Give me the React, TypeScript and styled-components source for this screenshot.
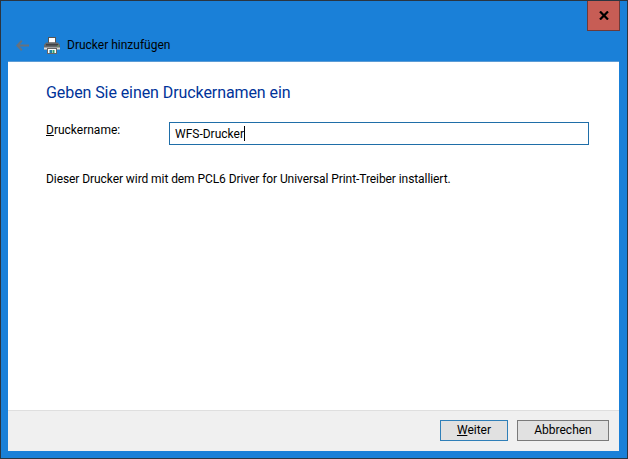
import styled, { createGlobalStyle } from 'styled-components';

const GlobalStyle = createGlobalStyle`
  html, body {
    margin: 0;
    padding: 0;
    background: #1a80d8;
  }
  * {
    box-sizing: border-box;
  }
`;

function BackArrow() {
  return (
    <svg width='13' height='11' viewBox='0 0 13 11'>
      <path d='M5.8 0.7 L1.3 5.5 L5.8 10.3 M1.3 5.5 H13' fill='none' stroke='#66727e' strokeWidth='2' />
    </svg>
  );
}

function PrinterIcon() {
  return (
    <svg width='16' height='17' viewBox='0 0 16 17'>
      <rect x='4.5' y='0.5' width='7' height='5.5' fill='#fff' stroke='#555' />
      <path d='M2 5.5 H14 L16 8 V12.5 H0 V8 Z' fill='#65696d' />
      <rect x='0' y='10.5' width='16' height='2' fill='#dcdcdc' />
      <rect x='2' y='7' width='12' height='1.5' fill='#3f4246' />
      <rect x='3.5' y='11.5' width='9' height='5' fill='#fff' stroke='#666' />
      <rect x='5.5' y='13' width='2.5' height='3' fill='#1c7fa8' />
      <rect x='8.5' y='13' width='2' height='3' fill='#2f9e6e' />
      <rect x='13.5' y='8.5' width='1' height='1' fill='#5fe06a' />
    </svg>
  );
}

export default function App() {
  return (
    <>
      <GlobalStyle />
      <StyledWindow>
        <StyledCaption>
          <StyledCloseButton>
            <svg width='10' height='9' viewBox='0 0 10 9'>
              <path d='M1 0.5 L9 8.5 M9 0.5 L1 8.5' stroke='#000' strokeWidth='2.2' />
            </svg>
          </StyledCloseButton>
        </StyledCaption>
        <StyledNavRow>
          <StyledBackSlot>
            <BackArrow />
          </StyledBackSlot>
          <PrinterIcon />
          <StyledWindowTitle>Drucker hinzufügen</StyledWindowTitle>
        </StyledNavRow>
        <StyledPanel>
          <StyledContent>
            <StyledHeading>Geben Sie einen Druckernamen ein</StyledHeading>
            <StyledFieldRow>
              <StyledLabel htmlFor='printerName'>
                <u>D</u>ruckername:
              </StyledLabel>
              <StyledField>
                <StyledValue id='printerName'>WFS-Drucker</StyledValue>
                <StyledCaret />
              </StyledField>
            </StyledFieldRow>
            <StyledInfo>Dieser Drucker wird mit dem PCL6 Driver for Universal Print-Treiber installiert.</StyledInfo>
          </StyledContent>
          <StyledFooter>
            <StyledButton $isDefault>
              <u>W</u>eiter
            </StyledButton>
            <StyledButton>Abbrechen</StyledButton>
          </StyledFooter>
        </StyledPanel>
      </StyledWindow>
    </>
  );
}

const StyledWindow = styled.div`
  display: flex;
  flex-direction: column;
  width: 628px;
  height: 459px;
  background: #1a80d8;
  border: 1px solid #2b3540;
  font-family: 'Roboto', 'Noto Sans', sans-serif;
  font-size: 12px;
  overflow: hidden;
`;

const StyledCaption = styled.div`
  display: flex;
  justify-content: flex-end;
  height: 30px;
  padding-right: 7px;
`;

const StyledCloseButton = styled.div`
  display: flex;
  align-items: center;
  justify-content: center;
  width: 33px;
  height: 30px;
  background: #c75d55;
  border: 1px solid #6b3a3a;
  border-top: none;
`;

const StyledNavRow = styled.div`
  display: flex;
  align-items: center;
  height: 31px;
  padding: 0 0 3px 15px;
`;

const StyledBackSlot = styled.div`
  display: flex;
  width: 28px;
`;

const StyledWindowTitle = styled.span`
  margin-left: 7px;
  color: #000;
`;

const StyledPanel = styled.div`
  display: flex;
  flex: 1;
  flex-direction: column;
  margin: 0 8px 7px 7px;
  background: #fff;
  box-shadow: 0 -1px 0 #5b9bd5;
`;

const StyledContent = styled.div`
  flex: 1;
  padding: 20px 30px 0 38px;
`;

const StyledHeading = styled.h1`
  margin: 0;
  color: #003399;
  font-size: 16px;
  font-weight: 400;
  line-height: 22px;
  letter-spacing: -0.08px;
`;

const StyledFieldRow = styled.div`
  display: flex;
  align-items: flex-start;
  margin-top: 18px;
`;

const StyledLabel = styled.label`
  width: 123px;
  line-height: 16px;
`;

const StyledField = styled.div`
  display: flex;
  align-items: center;
  flex: 1;
  height: 23px;
  padding-left: 5px;
  border: 1px solid #1f6ea8;
`;

const StyledValue = styled.span``;

const StyledCaret = styled.span`
  width: 1px;
  height: 15px;
  background: #000;
`;

const StyledInfo = styled.p`
  margin: 26px 0 0;
  line-height: 16px;
  letter-spacing: -0.075px;
`;

const StyledFooter = styled.div`
  display: flex;
  justify-content: flex-end;
  gap: 9px;
  height: 41px;
  padding: 9px 10px 0 0;
  background: #f0f0f0;
  border-top: 1px solid #dfdfdf;
`;

const StyledButton = styled.div<{ $isDefault?: boolean }>`
  width: ${({ $isDefault }) => ($isDefault ? '68px' : '92px')};
  height: 21px;
  text-align: center;
  line-height: 19px;
  background: #e1e1e1;
  border: 1px solid ${({ $isDefault }) => ($isDefault ? '#2f7fb8' : '#7a7a7a')};
`;
